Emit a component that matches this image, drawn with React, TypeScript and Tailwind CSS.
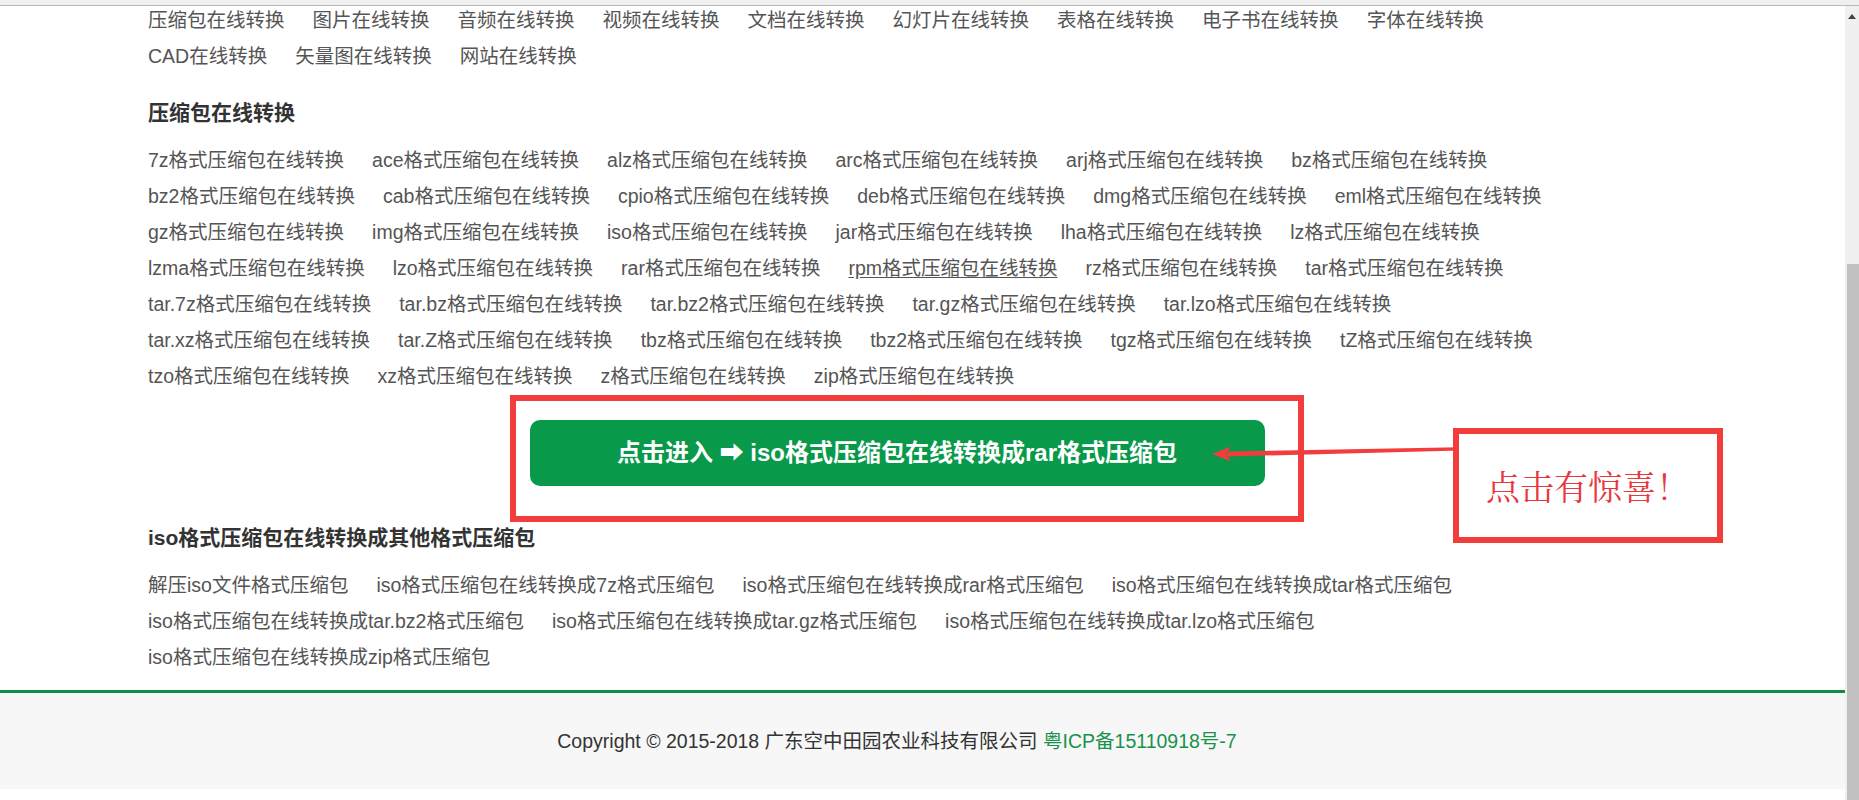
import React from "react";

const font = "font-['Liberation_Sans','Noto_Sans_CJK_SC','DejaVu_Sans',sans-serif]";

const navRows = [
  ["压缩包在线转换", "图片在线转换", "音频在线转换", "视频在线转换", "文档在线转换", "幻灯片在线转换", "表格在线转换", "电子书在线转换", "字体在线转换"],
  ["CAD在线转换", "矢量图在线转换", "网站在线转换"],
];

const formatRows = [
  ["7z", "ace", "alz", "arc", "arj", "bz"],
  ["bz2", "cab", "cpio", "deb", "dmg", "eml"],
  ["gz", "img", "iso", "jar", "lha", "lz"],
  ["lzma", "lzo", "rar", "rpm", "rz", "tar"],
  ["tar.7z", "tar.bz", "tar.bz2", "tar.gz", "tar.lzo"],
  ["tar.xz", "tar.Z", "tbz", "tbz2", "tgz", "tZ"],
  ["tzo", "xz", "z", "zip"],
];

const isoRows = [
  ["解压iso文件格式压缩包", "iso格式压缩包在线转换成7z格式压缩包", "iso格式压缩包在线转换成rar格式压缩包", "iso格式压缩包在线转换成tar格式压缩包"],
  ["iso格式压缩包在线转换成tar.bz2格式压缩包", "iso格式压缩包在线转换成tar.gz格式压缩包", "iso格式压缩包在线转换成tar.lzo格式压缩包"],
  ["iso格式压缩包在线转换成zip格式压缩包"],
];

function LinkRows({ rows, underline }: { rows: string[][]; underline?: string }) {
  return (
    <div className="flex flex-col">
      {rows.map((row, i) => (
        <div key={i} className="flex gap-x-[28px] leading-[36px] text-[19.5px] text-[#555] whitespace-nowrap">
          {row.map((t) => (
            <a key={t} href="#" className={t === underline ? "underline underline-offset-2" : ""}>
              {t}
            </a>
          ))}
        </div>
      ))}
    </div>
  );
}

export default function App() {
  return (
    <div className={`relative w-[1859px] h-[800px] overflow-hidden bg-white ${font}`}>
      <div className="h-[6px] bg-[#f0f0f0] border-b border-[#b9b9b9]" />
      <div className="flex h-[794px]">
        <main className="w-[1845px] flex flex-col">
          <div className="ml-[148px] w-[1498px] -mt-[4px]">
            <LinkRows rows={navRows} />

            <h2 className="mt-[24px] text-[21px] leading-[30px] font-bold text-[#333]">压缩包在线转换</h2>
            <div className="mt-[14px]">
              <LinkRows rows={formatRows.map((r) => r.map((f) => `${f}格式压缩包在线转换`))} underline="rpm格式压缩包在线转换" />
            </div>

            <div className="mt-[26px] flex justify-center">
              <a
                href="#"
                className="flex h-[66px] w-[735px] items-center justify-center rounded-[10px] bg-[#08994a] text-[24px] font-bold text-white"
              >
                点击进入 ➡ iso格式压缩包在线转换成rar格式压缩包
              </a>
            </div>

            <h2 className="mt-[37px] text-[21px] leading-[30px] font-bold text-[#333]">iso格式压缩包在线转换成其他格式压缩包</h2>
            <div className="mt-[14px]">
              <LinkRows rows={isoRows} />
            </div>
          </div>

          <footer className="mt-[15px] h-[99px] border-t-[3px] border-[#0c8f45] bg-[#f7f7f7]">
            <div className="w-[1794px] pt-[33px] text-center text-[19.5px] leading-[30px] text-[#333]">
              Copyright © 2015-2018 广东空中田园农业科技有限公司 <a href="#" className="text-[#17924a]">粤ICP备15110918号-7</a>
            </div>
          </footer>
        </main>

        <div className="relative w-[14px] bg-[#f0f0f0]">
          <div className="mx-auto mt-[8px] h-0 w-0 border-x-[4px] border-b-[5px] border-x-transparent border-b-[#444]" />
          <div className="absolute left-[2px] right-0 top-[258px] bottom-0 bg-[#c1c1c1]" />
        </div>
      </div>

      {/* annotation overlay */}
      <div className="pointer-events-none absolute left-[510px] top-[395px] h-[127px] w-[794px] border-[6px] border-[#f33c3c]" />
      <svg className="pointer-events-none absolute left-[1200px] top-[440px]" width="310" height="26" viewBox="0 0 310 26">
        <polygon points="298,6.5 298,9.5 27,16.5 27,11.5" fill="#f33c3c" />
        <polygon points="12,14 31,6.5 26,14 31,21.5" fill="#f33c3c" />
      </svg>
      <div className="pointer-events-none absolute left-[1453px] top-[428px] flex h-[115px] w-[270px] items-center justify-center border-[6px] border-[#f33c3c] bg-white">
        <span className="font-['Noto_Serif_CJK_SC','Liberation_Serif','Noto_Sans_CJK_SC',serif] text-[34px] text-[#e8383d]">点击有惊喜！</span>
      </div>
    </div>
  );
}
